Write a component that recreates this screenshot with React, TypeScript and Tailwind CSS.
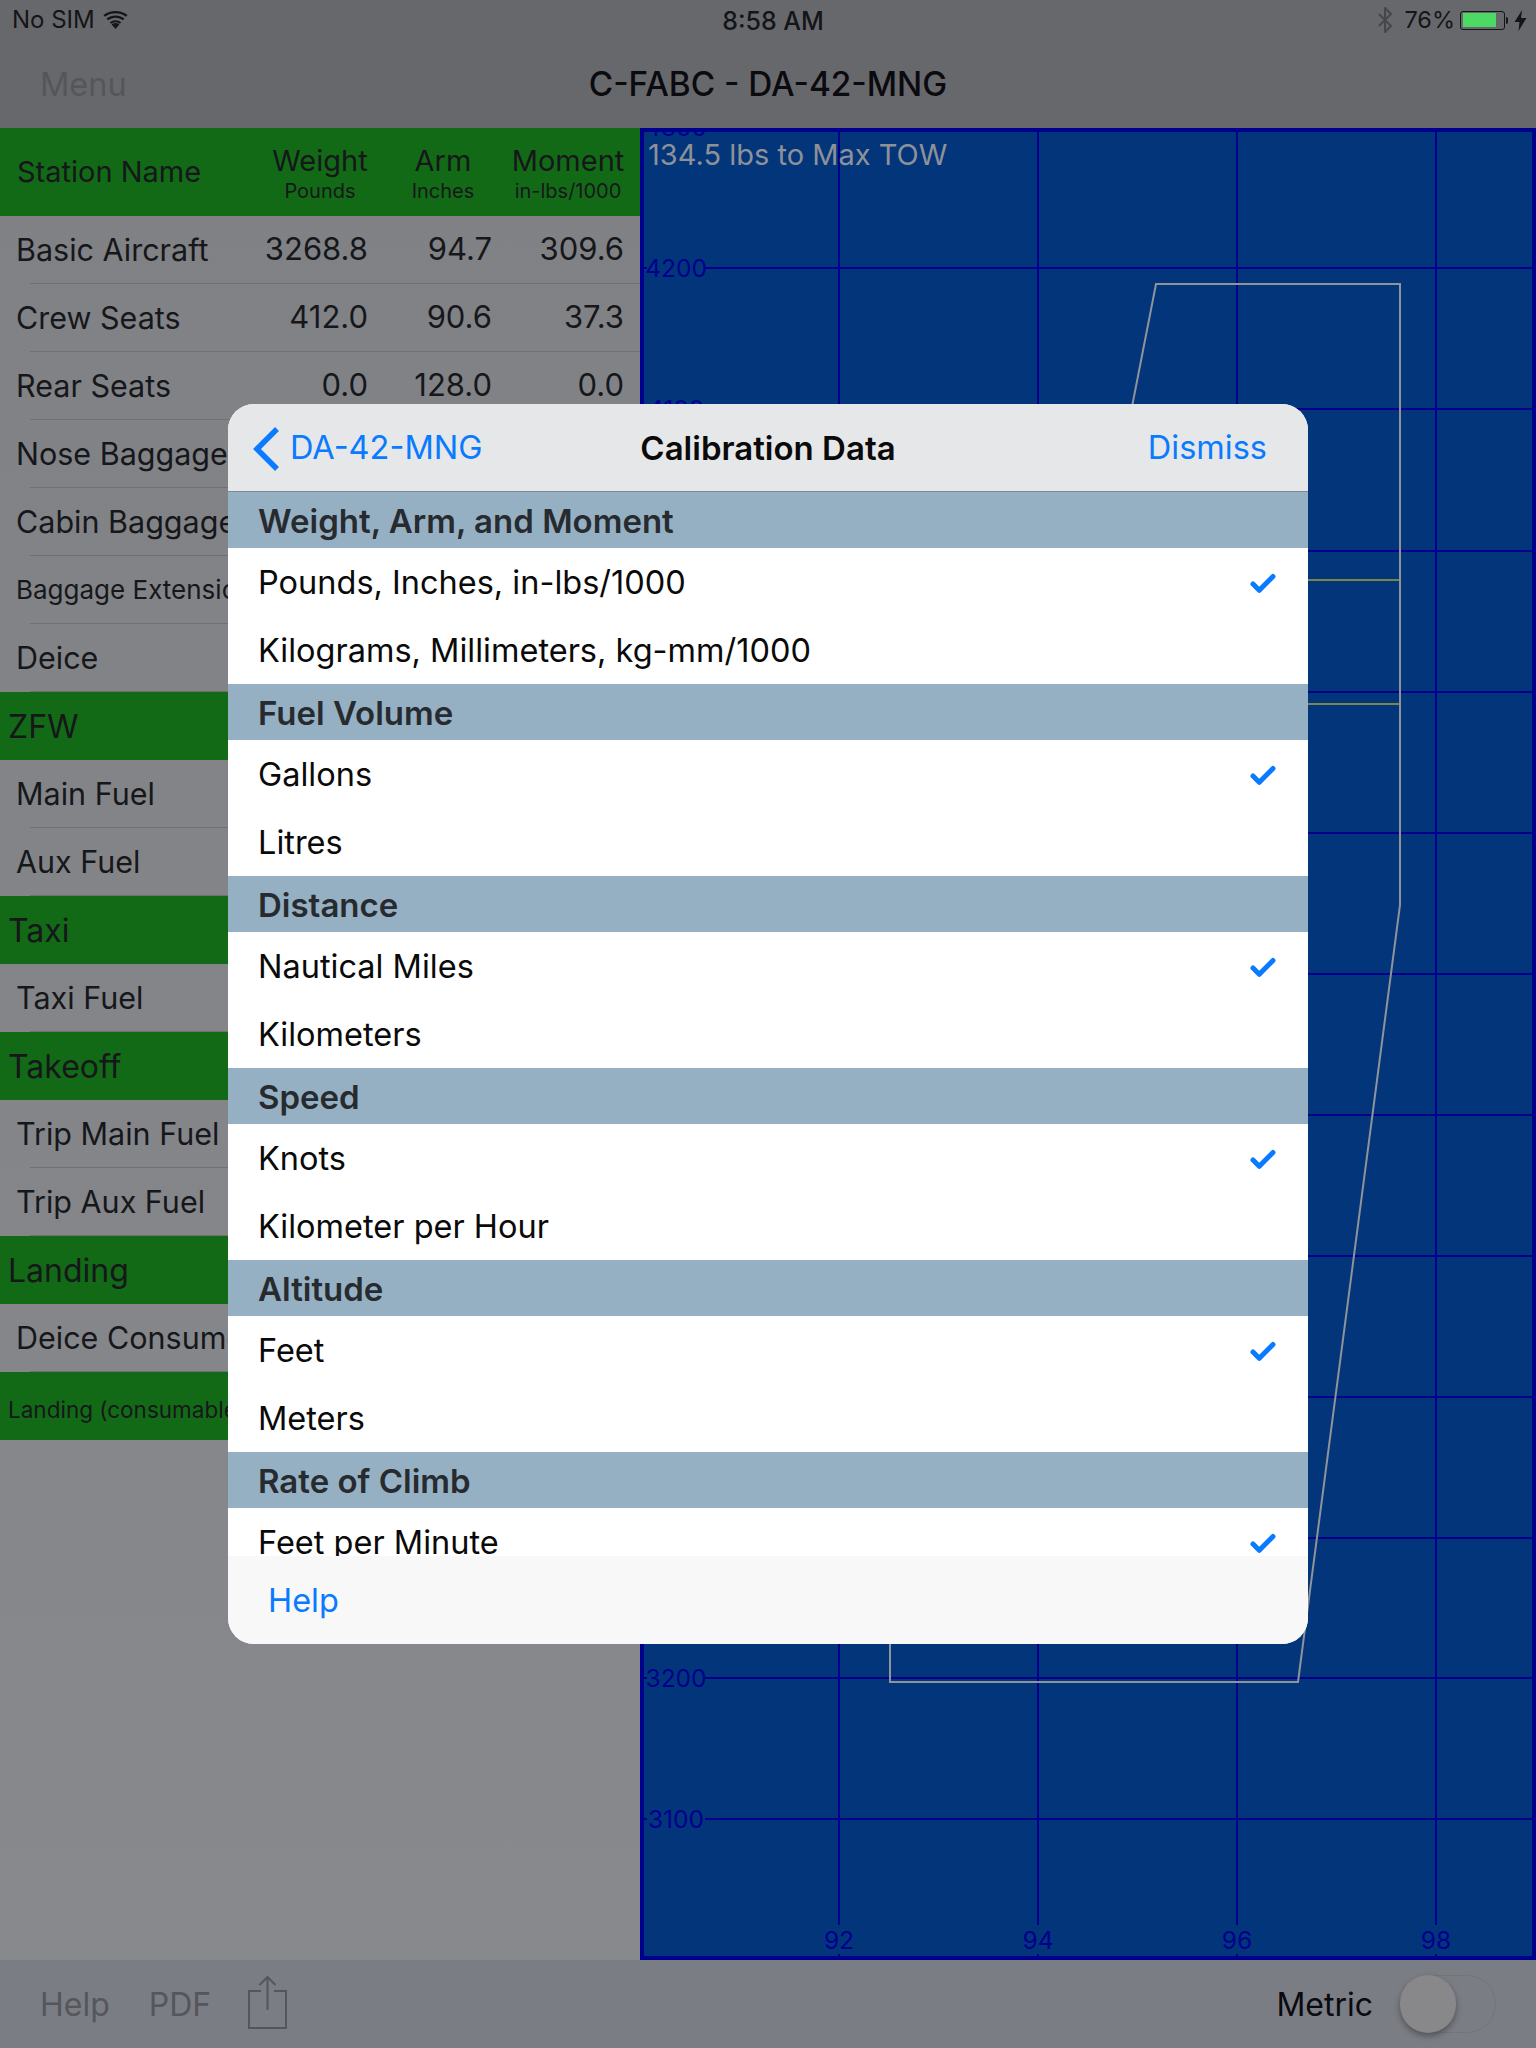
import { Fragment } from 'react'
import { Check } from 'lucide-react'

const stations = [
  { name: 'Nose Baggage' },
  { name: 'Cabin Baggage' },
  { name: 'Baggage Extension', small: true },
  { name: 'Deice' },
  { name: 'ZFW', total: true },
  { name: 'Main Fuel' },
  { name: 'Aux Fuel' },
  { name: 'Taxi', total: true },
  { name: 'Taxi Fuel' },
  { name: 'Takeoff', total: true },
  { name: 'Trip Main Fuel' },
  { name: 'Trip Aux Fuel' },
  { name: 'Landing', total: true },
  { name: 'Deice Consumed' },
  { name: 'Landing (consumables)', total: true, small: true },
]

const loaded = [
  ['Basic Aircraft', '3268.8', '94.7', '309.6'],
  ['Crew Seats', '412.0', '90.6', '37.3'],
  ['Rear Seats', '0.0', '128.0', '0.0'],
]

const calibration = [
  { title: 'Weight, Arm, and Moment', options: ['Pounds, Inches, in-lbs/1000', 'Kilograms, Millimeters, kg-mm/1000'] },
  { title: 'Fuel Volume', options: ['Gallons', 'Litres'] },
  { title: 'Distance', options: ['Nautical Miles', 'Kilometers'] },
  { title: 'Speed', options: ['Knots', 'Kilometer per Hour'] },
  { title: 'Altitude', options: ['Feet', 'Meters'] },
  { title: 'Rate of Climb', options: ['Feet per Minute', 'Feet per Second'] },
]

const weightLines = [
  [4300, 127],
  [4200, 268],
  [4100, 409],
  [4000, 551],
  [3900, 692],
  [3800, 833],
  [3700, 974],
  [3600, 1115],
  [3500, 1256],
  [3400, 1397],
  [3300, 1538],
  [3200, 1678],
  [3100, 1819],
]

const armLines = [
  [92, 839],
  [94, 1038],
  [96, 1237],
  [98, 1436],
]

function Chart() {
  return (
    <svg viewBox="640 128 896 1832" className="block h-full w-full font-['Inter',sans-serif]">
      <rect x="640" y="128" width="896" height="1832" fill="#03357a" />
      {weightLines.map(([label, y]) => (
        <Fragment key={label}>
          <line x1="705" x2="1536" y1={y} y2={y} stroke="#00008f" strokeWidth="2" />
          <line x1="640" x2="647" y1={y} y2={y} stroke="#00008f" strokeWidth="2" />
          <text x="676" y={y + 9} textAnchor="middle" fontSize="24.5" fill="#00008f">{label}</text>
        </Fragment>
      ))}
      {armLines.map(([label, x]) => (
        <Fragment key={label}>
          <line x1={x} x2={x} y1="128" y2="1925" stroke="#00008f" strokeWidth="2" />
          <line x1={x} x2={x} y1="1954" y2="1960" stroke="#00008f" strokeWidth="2" />
          <text x={x} y="1949" textAnchor="middle" fontSize="24.5" fill="#00008f">{label}</text>
        </Fragment>
      ))}
      <line x1="1100" x2="1400" y1="580" y2="580" stroke="#78864c" strokeWidth="2" />
      <line x1="1100" x2="1400" y1="704" y2="704" stroke="#78864c" strokeWidth="2" />
      <path d="M890 1682 L890 1644 L1156 284 L1400 284 L1400 905 L1298 1682 Z" fill="none" stroke="#8f939a" strokeWidth="2" />
      <rect x="642" y="130" width="892" height="1828" fill="none" stroke="#00008f" strokeWidth="4" />
    </svg>
  )
}

function ShareIcon() {
  return (
    <svg width="40" height="56" viewBox="0 0 40 56" fill="none" stroke="#55565b" strokeWidth="2">
      <path d="M13 16 H1 V53 H38 V16 H26" />
      <path d="M19.5 35 V2 M11.5 10 L19.5 2 L27.5 10" />
    </svg>
  )
}

function WifiIcon() {
  return (
    <svg width="25" height="18" viewBox="0 0 25 18" fill="#141518">
      <path d="M12.5 18 L8.6 13.4 C10.9 11.6 14.1 11.6 16.4 13.4 Z" />
      <path d="M6.8 11.3 C10.2 8.5 14.8 8.5 18.2 11.3 L16.9 12.8 C14.3 10.7 10.7 10.7 8.1 12.8 Z" />
      <path d="M3.6 7.6 C8.9 3.4 16.1 3.4 21.4 7.6 L20 9.3 C15.5 5.8 9.5 5.8 5 9.3 Z" />
      <path d="M0.4 4 C7.6 -1.3 17.4 -1.3 24.6 4 L23 5.7 C16.8 1.2 8.2 1.2 2 5.7 Z" />
    </svg>
  )
}

function Battery() {
  return (
    <div className="flex items-center">
      <div className="h-[19px] w-[45px] rounded-[3px] border border-[#141518] p-[1.5px]">
        <div className="h-full w-[33px] bg-[#4cd964]" />
      </div>
      <div className="ml-[1px] h-[7px] w-[2px] rounded-r-sm bg-[#141518]" />
      <svg width="13" height="21" viewBox="0 0 13 21" fill="#141518" className="ml-[6px]">
        <path d="M8 0 L0.5 12 H5.5 L4.5 21 L12.5 8 H7 Z" />
      </svg>
    </div>
  )
}

function TopBars() {
  return (
    <div className="relative h-[128px] shrink-0 bg-[#67686c]">
      <div className="flex h-[40px] items-center justify-between pl-[12px] pr-[9px] text-[24px] text-[#141518]">
        <div className="flex items-center gap-[8px]">
          <span>No SIM</span>
          <WifiIcon />
        </div>
        <div className="flex items-center gap-[5px]">
          <svg width="16" height="26" viewBox="0 0 16 26" fill="none" stroke="#46474b" strokeWidth="2">
            <path d="M2 7 L14 19 L8 25 V1 L14 7 L2 19" />
          </svg>
          <span className="ml-[6px] text-[23.5px] text-[#141518]">76%</span>
          <Battery />
        </div>
      </div>
      <div className="absolute left-0 top-[3px] flex h-[36px] w-full justify-center text-[25px] font-medium leading-[36px] text-[#141518]">
        <span className="ml-[10px]">8:58 AM</span>
      </div>
      <div className="relative flex h-[88px] items-center justify-center pt-[2px]">
        <span className="absolute left-[40px] text-[32.5px] text-[#55565a]">Menu</span>
        <span className="text-[33.3px] font-medium text-[#0a0a0f]">C-FABC - DA-42-MNG</span>
      </div>
    </div>
  )
}

function StationTable() {
  return (
    <div className="w-[640px] shrink-0 bg-gradient-to-b from-[#808185] to-[#88898d] text-[#16171a]">
      <div className="flex h-[88px] items-center bg-[#126a17] pl-[17px]">
        <span className="w-[249px] text-[29px]">Station Name</span>
        <div className="flex w-[108px] flex-col items-center pt-[3px]">
          <span className="text-[29px] leading-[36px]">Weight</span>
          <span className="text-[20px] leading-[25px]">Pounds</span>
        </div>
        <div className="ml-[23px] flex w-[92px] flex-col items-center pt-[3px]">
          <span className="text-[29px] leading-[36px]">Arm</span>
          <span className="text-[20px] leading-[25px]">Inches</span>
        </div>
        <div className="ml-[23px] flex w-[112px] flex-col items-center pt-[3px]">
          <span className="text-[29px] leading-[36px]">Moment</span>
          <span className="text-[20px] leading-[25px]">in-lbs/1000</span>
        </div>
      </div>
      {loaded.map(([name, weight, arm, moment]) => (
        <div key={name} className="relative flex h-[68px] items-center pb-[1px] pl-[16px] pr-[16px]">
          <span className="flex-1 text-[30.5px]">{name}</span>
          <span className="w-[130px] text-right text-[31px]">{weight}</span>
          <span className="w-[124px] text-right text-[31px]">{arm}</span>
          <span className="w-[132px] text-right text-[31px]">{moment}</span>
          <div className="absolute bottom-0 left-[30px] right-0 h-px bg-[#6f7074]" />
        </div>
      ))}
      {stations.map((station) =>
        station.total ? (
          <div
            key={station.name}
            className={`flex h-[68px] items-center bg-[#126a17] pl-[8px] ${station.small ? 'pt-[8px] text-[22.5px]' : 'pt-[2px] text-[32px]'}`}
          >
            {station.name}
          </div>
        ) : (
          <div
            key={station.name}
            className={`relative flex h-[68px] items-center pb-[1px] pl-[16px] ${station.small ? 'text-[26px]' : 'text-[30.5px]'}`}
          >
            {station.name}
            <div className="absolute bottom-0 left-[30px] right-0 h-px bg-[#6f7074]" />
          </div>
        ),
      )}
    </div>
  )
}

function Toolbar() {
  return (
    <div className="flex h-[88px] shrink-0 items-center justify-between bg-[#7b7d84] pl-[40px] pr-[39px]">
      <div className="flex items-center pt-[1px] text-[32px] text-[#55565b]">
        <span>Help</span>
        <span className="ml-[39px]">PDF</span>
        <div className="ml-[37px] -mt-[3px]">
          <ShareIcon />
        </div>
      </div>
      <div className="flex items-center">
        <span className="pt-[1px] text-[32px] text-[#0a0a0f]">Metric</span>
        <div className="relative ml-[27px] mr-[1px] h-[58px] w-[96px] rounded-full border border-[#74757b]">
          <div className="absolute -top-px -left-px h-[58px] w-[56px] rounded-full bg-[#88888b] shadow-[0_3px_6px_rgba(0,0,0,0.35)]" />
        </div>
      </div>
    </div>
  )
}

function CalibrationModal() {
  return (
    <div className="absolute left-[228px] top-[404px] flex h-[1240px] w-[1080px] flex-col overflow-hidden rounded-[26px] bg-white">
      <div className="relative flex h-[88px] shrink-0 items-center justify-center border-b border-[#7b8a94] bg-[#e6e7e9] pt-[2px]">
        <div className="absolute left-[25px] flex items-center gap-[11px] text-[#0a7aff]">
          <svg width="26" height="44" viewBox="0 0 26 44" fill="none" stroke="currentColor" strokeWidth="5.5">
            <path d="M24 2 L4 22 L24 42" />
          </svg>
          <span className="text-[32.5px]">DA-42-MNG</span>
        </div>
        <span className="text-[33px] font-semibold text-[#0a0a0a]">Calibration Data</span>
        <span className="absolute right-[41px] text-[32.5px] text-[#0a7aff]">Dismiss</span>
      </div>
      <div className="min-h-0 flex-1 overflow-hidden">
        {calibration.map((group) => (
          <div key={group.title}>
            <div className="flex h-[56px] items-center bg-[#95b0c3] pl-[30px] pt-[4px] text-[33px] font-semibold text-[#272b2f]">
              {group.title}
            </div>
            {group.options.map((option, i) => (
              <div key={option} className="flex h-[68px] items-center justify-between pl-[30px] pr-[30px] pt-[3px] text-[32.5px] text-[#0a0a0a]">
                <span>{option}</span>
                {i === 0 && <Check size={30} strokeWidth={4} className="text-[#0a7aff]" />}
              </div>
            ))}
          </div>
        ))}
      </div>
      <div className="flex h-[88px] shrink-0 items-center bg-[#f8f8f8] pl-[40px] pt-[3px] text-[32.5px] text-[#0a7aff]">Help</div>
    </div>
  )
}

export default function App() {
  return (
    <main className="relative flex h-[2048px] w-[1536px] flex-col overflow-hidden bg-[#87888c] font-['Inter',sans-serif]">
      <TopBars />
      <div className="flex min-h-0 flex-1">
        <StationTable />
        <div className="relative flex-1">
          <Chart />
          <span className="absolute left-[8px] top-[5px] text-[29px] text-[#8e9298]">134.5 lbs to Max TOW</span>
        </div>
      </div>
      <Toolbar />
      <CalibrationModal />
    </main>
  )
}
